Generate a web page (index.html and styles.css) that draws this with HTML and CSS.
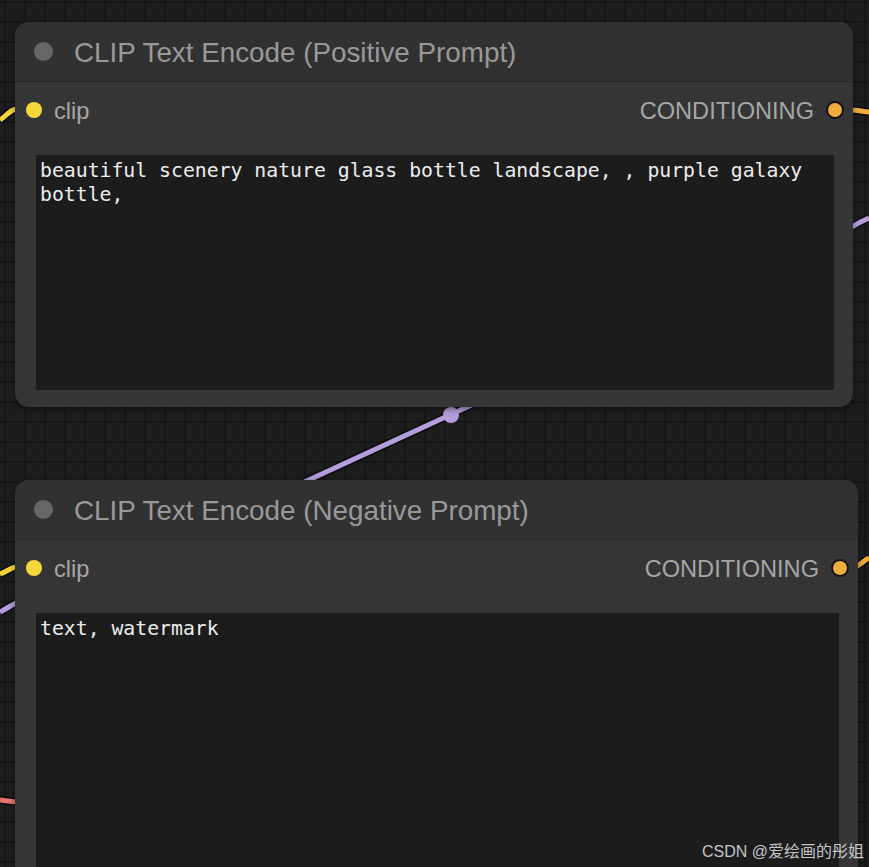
FILE: index.html
```html
<!DOCTYPE html>
<html lang="en">

<head>
    <meta charset="UTF-8">
    <title>CLIP Text Encode</title>
    <link rel="stylesheet" href="styles.css">
</head>

<body>

    <main class="canvas">
        <!-- links between nodes, drawn under the nodes -->
        <svg class="links" width="869" height="867" viewBox="0 0 869 867">
            <g class="outline">
                <path d="M0 120 C6 116 10 110 16 109" />
                <path d="M852 110 C858 110 864 112 869 112" />
                <path d="M852 227 C858 223 864 220 869 218" />
                <path d="M300 484 L478 402" />
                <path d="M0 574 C6 572 10 568 16 567" />
                <path d="M0 612 C6 609 10 606 16 603" />
                <path d="M0 800 L16 802" />
                <path d="M857 566 C861 564 865 560 869 558" />
            </g>
            <path class="wire yellow" d="M0 120 C6 116 10 110 16 109" />
            <path class="wire orange" d="M852 110 C858 110 864 112 869 112" />
            <path class="wire purple" d="M852 227 C858 223 864 220 869 218" />
            <path class="wire purple" d="M300 484 L478 402" />
            <circle class="marker" cx="451" cy="415" r="8" />
            <path class="wire yellow" d="M0 574 C6 572 10 568 16 567" />
            <path class="wire purple" d="M0 612 C6 609 10 606 16 603" />
            <path class="wire red" d="M0 800 L16 802" />
            <path class="wire orange" d="M857 566 C861 564 865 560 869 558" />
        </svg>

        <section class="node node-positive">
            <header class="node-title">
                <span class="title-dot"></span>
                <h2>CLIP Text Encode (Positive Prompt)</h2>
            </header>
            <div class="slots">
                <div class="slot">
                    <span class="dot dot-clip"></span>
                    <span>clip</span>
                </div>
                <div class="slot">
                    <span>CONDITIONING</span>
                    <span class="dot dot-cond"></span>
                </div>
            </div>
            <div class="prompt">beautiful scenery nature glass bottle landscape, , purple galaxy bottle,</div>
        </section>

        <section class="node node-negative">
            <header class="node-title">
                <span class="title-dot"></span>
                <h2>CLIP Text Encode (Negative Prompt)</h2>
            </header>
            <div class="slots">
                <div class="slot">
                    <span class="dot dot-clip"></span>
                    <span>clip</span>
                </div>
                <div class="slot">
                    <span>CONDITIONING</span>
                    <span class="dot dot-cond"></span>
                </div>
            </div>
            <div class="prompt">text, watermark</div>
        </section>

        <span class="watermark">CSDN @爱绘画的彤姐</span>
    </main>

</body>

</html>
```

FILE: styles.css
```css
* {
    margin: 0;
    padding: 0;
    box-sizing: border-box;
}

body {
    background-color: #1d1d1d;
    font-family: 'Liberation Sans', Arial, sans-serif;
    overflow: hidden;
}

.canvas {
    position: relative;
    width: 869px;
    height: 867px;
    overflow: hidden;
    background-color: #1d1d1d;
    background-image:
        linear-gradient(to right, #161616 2px, transparent 2px),
        linear-gradient(to bottom, #161616 2px, transparent 2px);
    background-size: 20px 20px;
    background-position: 4px 1px;
}

.links {
    position: absolute;
    left: 0;
    top: 0;
}

.outline path {
    fill: none;
    stroke: #000;
    stroke-width: 8;
    opacity: .55;
}

.wire {
    fill: none;
    stroke-width: 5;
}

.yellow { stroke: #f5d43a; }
.orange { stroke: #f0ad3c; }
.purple { stroke: #b39ddb; }
.red { stroke: #e8746c; }

.marker {
    fill: #b39ddb;
}

.node {
    position: absolute;
    left: 15px;
    display: flex;
    flex-direction: column;
    background: #353535;
    border-radius: 14px;
    box-shadow: 0 2px 6px rgba(0, 0, 0, .45);
}

.node-positive {
    top: 22px;
    width: 838px;
    height: 385px;
    padding-bottom: 17px;
}

.node-negative {
    top: 480px;
    width: 843px;
    height: 420px;
}

.node-title {
    display: flex;
    align-items: center;
    gap: 21px;
    height: 60px;
    padding-left: 19px;
    padding-top: 2px;
    background: #313131;
    border-radius: 14px 14px 0 0;
    border-bottom: 1px solid #292929;
}

.title-dot {
    width: 19px;
    height: 19px;
    border-radius: 50%;
    background: #666;
    margin-top: -2px;
}

.node-title h2 {
    font-weight: normal;
    font-size: 27.8px;
    color: #999;
}

.slots {
    display: flex;
    justify-content: space-between;
    align-items: center;
    height: 56px;
    padding: 0 11px 0 11px;
}

.slot {
    display: flex;
    align-items: center;
    gap: 12px;
    font-size: 23.6px;
    color: #a6a6a6;
    padding-top: 2px;
}

.dot {
    width: 16px;
    height: 16px;
    border-radius: 50%;
    margin-top: -2px;
}

.dot-clip {
    background: #f7d83b;
}

.dot-cond {
    background: #f0ad3c;
    border: 2px solid #111;
    width: 18px;
    height: 18px;
    margin-right: -2px;
}

.prompt {
    flex: 1;
    margin: 17px 19px 0 21px;
    padding: 4px 4px;
    background: #1c1c1c;
    color: #ededed;
    font-family: 'DejaVu Sans Mono', monospace;
    font-size: 19.8px;
    line-height: 24px;
    white-space: pre-wrap;
}

.watermark {
    position: absolute;
    right: 5px;
    bottom: 5px;
    font-family: 'Liberation Sans', 'Noto Sans CJK SC', sans-serif;
    font-size: 16px;
    color: rgba(255, 255, 255, .75);
}
```
